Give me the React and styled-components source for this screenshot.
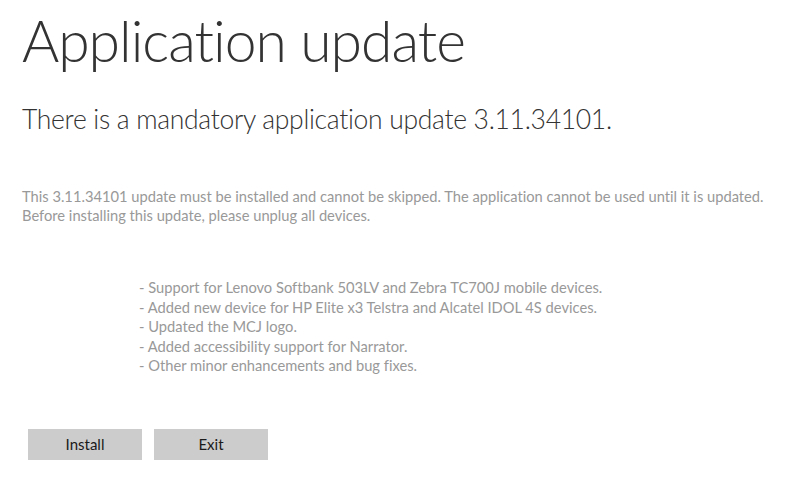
import React from 'react';
import styled, { createGlobalStyle } from 'styled-components';

const GlobalStyle = createGlobalStyle`
  html, body {
    margin: 0;
    padding: 0;
    background: #ffffff;
  }
`

const Page = styled.div`
  width: 794px;
  height: 486px;
  box-sizing: border-box;
  padding: 4px 22px 0 22px;
  font-family: Lato, "Open Sans", sans-serif;
  font-variant-ligatures: none;
  display: flex;
  flex-direction: column;
`

const Title = styled.h1`
  margin: 0;
  font-size: 57px;
  font-weight: 300;
  line-height: 72px;
  letter-spacing: -1px;
  color: #333333;
`

const Subtitle = styled.h2`
  margin: 25px 0 0 0;
  font-size: 26.5px;
  font-weight: 300;
  line-height: 36px;
  letter-spacing: -0.3px;
  color: #333333;
`

const Notice = styled.p`
  margin: 50px 0 0 0;
  font-size: 14.7px;
  line-height: 19px;
  color: #999999;
  white-space: nowrap;
`

const Changes = styled.ul`
  list-style: none;
  margin: 53px 0 0 117px;
  padding: 0;
`

const Change = styled.li`
  font-size: 14.7px;
  line-height: 19.5px;
  color: #999999;
`

const Buttons = styled.div`
  display: flex;
  gap: 12px;
  margin: 53px 0 0 6px;
`

const Button = styled.button`
  width: 114px;
  height: 31px;
  border: none;
  border-radius: 0;
  background: #cccccc;
  color: #1a1a1a;
  font-family: Lato, "Open Sans", sans-serif;
  font-size: 15px;
  padding: 0;
  cursor: pointer;
`

const changes = [
  'Support for Lenovo Softbank 503LV and Zebra TC700J mobile devices.',
  'Added new device for HP Elite x3 Telstra and Alcatel IDOL 4S devices.',
  'Updated the MCJ logo.',
  'Added accessibility support for Narrator.',
  'Other minor enhancements and bug fixes.',
]

const App = () => {
  return (
    <>
      <GlobalStyle />
      <Page>
        <Title>Application update</Title>
        <Subtitle>There is a mandatory application update 3.11.34101.</Subtitle>
        <Notice>
          This 3.11.34101 update must be installed and cannot be skipped. The application cannot be used until it is updated.
          <br />
          Before installing this update, please unplug all devices.
        </Notice>
        <Changes>
          {changes.map((c) => (
            <Change key={c}>- {c}</Change>
          ))}
        </Changes>
        <Buttons>
          <Button>Install</Button>
          <Button>Exit</Button>
        </Buttons>
      </Page>
    </>
  )
}

export default App;
